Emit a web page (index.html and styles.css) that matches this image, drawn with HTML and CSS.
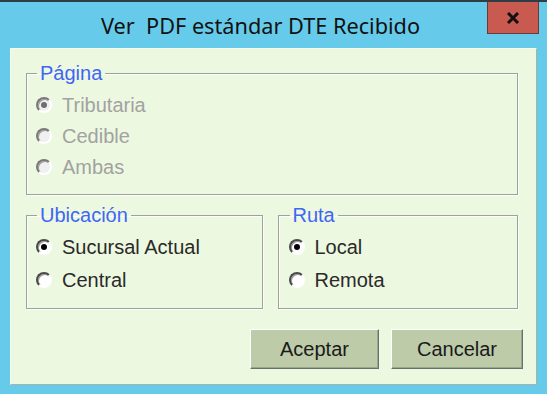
FILE: index.html
```html
<!DOCTYPE html>
<html>
<head>
<meta charset="utf-8">
<link rel="stylesheet" href="styles.css">
</head>
<body>
<div class="window">
  <div class="topline"></div>
  <div class="titlebar">
    <span class="title">Ver&nbsp; PDF estándar DTE Recibido</span>
    <div class="close"><svg width="14" height="12" viewBox="0 0 14 12"><path d="M2 1 L12 11 M12 1 L2 11" stroke="#111" stroke-width="3"/></svg></div>
  </div>
  <div class="client">
    <fieldset class="group pagina">
      <legend>Página</legend>
      <label class="opt disabled"><span class="radio checked"></span>Tributaria</label>
      <label class="opt disabled"><span class="radio"></span>Cedible</label>
      <label class="opt disabled"><span class="radio"></span>Ambas</label>
    </fieldset>
    <div class="row">
      <fieldset class="group ubic">
        <legend>Ubicación</legend>
        <label class="opt"><span class="radio checked"></span>Sucursal Actual</label>
        <label class="opt"><span class="radio"></span>Central</label>
      </fieldset>
      <fieldset class="group ruta">
        <legend>Ruta</legend>
        <label class="opt"><span class="radio checked"></span>Local</label>
        <label class="opt"><span class="radio"></span>Remota</label>
      </fieldset>
    </div>
    <div class="buttons">
      <button class="btn accept">Aceptar</button>
      <button class="btn cancel">Cancelar</button>
    </div>
  </div>
</div>
</body>
</html>
```

FILE: styles.css
```css
* { box-sizing: border-box; }
html, body { margin: 0; padding: 0; }
body { width: 547px; height: 394px; overflow: hidden; background: #66cbea; }
.window { width: 547px; height: 394px; background: #66cbea; display: flex; flex-direction: column; }
.topline { height: 2px; background: #2f3d44; flex: none; }
.titlebar { height: 46px; display: flex; align-items: flex-start; flex: none; }
.title {
  font-family: "Noto Sans", sans-serif;
  font-size: 21.7px;
  color: #111;
  margin-left: 101px;
  margin-top: 10px;
  line-height: 28px;
  white-space: pre;
}
.close {
  margin-left: auto;
  margin-right: 8px;
  width: 52px;
  height: 32px;
  background: #c85a50;
  border: 1px solid #6a3a35;
  border-top: none;
  display: flex;
  align-items: center;
  justify-content: center;
}
.client {
  margin-left: 10px;
  width: 527px;
  height: 337px;
  background: #edf8e0;
  border-left: 1px solid #f6fdea;
  border-top: 1px solid #f6fdea;
  border-right: 1px solid #a9b2a6;
  border-bottom: 1px solid #a9b2a6;
  padding: 14px 18px 0 15px;
  font-family: "Liberation Sans", Arial, sans-serif;
  font-size: 20px;
  color: #2a2a2a;
}
.group {
  margin: 0;
  border: 1px solid #a0a0a0;
  box-shadow: inset 1px 1px 0 #fbfff5, 1px 1px 0 #fbfff5;
  padding: 6px 10px 0 9px;
  min-width: 0;
}
.group legend {
  color: #3f66f5;
  font-size: 20px;
  line-height: 20px;
  padding: 0 3px;
  margin-left: 1px;
}
.pagina { height: 132px; }
.pagina .opt { height: 31px; }
.row { display: flex; gap: 15px; margin-top: 10px; }
.ubic { width: 237px; height: 104px; padding-top: 5px; }
.ruta { width: 241px; height: 104px; padding-top: 5px; padding-left: 10px; }
.ubic .opt, .ruta .opt { height: 33px; }
.opt { display: flex; align-items: center; gap: 10px; line-height: 20px; }
.opt.disabled { color: #a2a2a2; }
.radio {
  width: 16px;
  height: 16px;
  border-radius: 50%;
  border: 2px solid;
  border-color: #4a4a4a #ffffff #ffffff #4a4a4a;
  background: #ffffff;
  box-shadow: inset 1px 1px 0 #9a9a9a;
  flex: none;
  display: flex;
  align-items: center;
  justify-content: center;
}
.disabled .radio { background: #f0f0f0; border-color: #7a7a7a #ffffff #ffffff #7a7a7a; }
.radio.checked::after {
  content: "";
  width: 6px;
  height: 6px;
  border-radius: 50%;
  background: #000;
}
.disabled .radio.checked::after { background: #6e6e6e; }
.buttons { display: flex; justify-content: flex-end; gap: 12px; margin-top: 20px; margin-right: -5px; }
.btn {
  height: 40px;
  background: #bdcba8;
  border: 1px solid;
  border-color: #ffffff #6e6e6e #6e6e6e #ffffff;
  box-shadow: inset -1px -1px 0 #9aa78a;
  font-family: "Liberation Sans", Arial, sans-serif;
  font-size: 20px;
  color: #1a1a1a;
  padding: 0;
}
.accept { width: 129px; }
.cancel { width: 132px; }
```
